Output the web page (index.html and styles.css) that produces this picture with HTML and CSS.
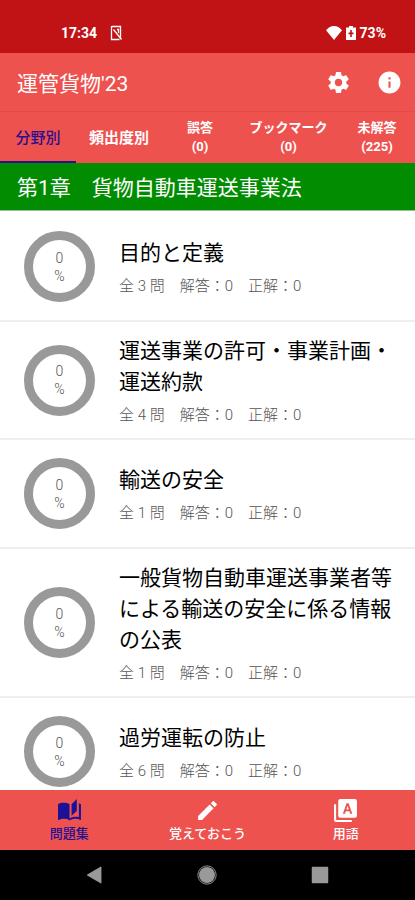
FILE: index.html
```html
<!DOCTYPE html>
<html lang="ja">
<head>
<meta charset="utf-8">
<meta name="viewport" content="width=device-width, initial-scale=1">
<title>運管貨物'23</title>
<link rel="stylesheet" href="styles.css">
</head>
<body>
<div class="status">
  <span class="status-side">
    <span>17:34</span>
    <svg class="sim" viewBox="0 0 14 16" aria-hidden="true"><path d="M3 1.500h8.500v11M2.500 1v13.500h8M4.500 4.500l8 10M8 4.500h1.500V8" fill="none" stroke="currentColor" stroke-width="1.300"/></svg>
  </span>
  <span class="status-side">
    <svg class="wifi" viewBox="0 0 16 14" aria-hidden="true"><path d="M8 14 0 4.300Q3.500 0 8 0t8 4.300z" fill="currentColor"/></svg>
    <svg class="battery" viewBox="0 0 10 14" aria-hidden="true"><path fill-rule="evenodd" d="M3 0h4v1.500h3V14H0V1.500h3zM4.200 4v2.500H2.500v1.700h1.700V11h1.600V8.200h1.700V6.500H5.800V4z" fill="currentColor"/></svg>
    <span>73%</span>
  </span>
</div>
<header class="appbar">
  <h1>運管貨物'23</h1>
  <button type="button" aria-label="設定"><svg viewBox="0 0 24 24"><path d="M12 15.500A3.500 3.500 0 0 1 8.500 12 3.500 3.500 0 0 1 12 8.500a3.500 3.500 0 0 1 3.500 3.500 3.500 3.500 0 0 1-3.500 3.500m7.430-2.530c.04-.32.07-.64.07-.97s-.03-.66-.07-1l2.110-1.630c.19-.15.24-.42.12-.64l-2-3.460c-.12-.22-.39-.31-.61-.22l-2.490 1c-.52-.39-1.060-.73-1.690-.98l-.37-2.650A.506.506 0 0 0 14 2h-4c-.25 0-.46.18-.5.42l-.37 2.650c-.63.25-1.170.59-1.690.98l-2.490-1c-.22-.09-.49 0-.61.22l-2 3.460c-.13.22-.07.49.12.64L4.570 11c-.04.34-.07.67-.07 1s.03.65.07.97l-2.110 1.660c-.19.15-.25.42-.12.64l2 3.460c.12.22.39.3.61.22l2.490-1.010c.52.4 1.060.74 1.690.99l.37 2.650c.04.24.25.42.5.42h4c.25 0 .46-.18.5-.42l.37-2.650c.63-.26 1.170-.59 1.690-.99l2.490 1.010c.22.08.49 0 .61-.22l2-3.460c.12-.22.07-.49-.12-.64z" fill="currentColor"/></svg></button>
  <button type="button" aria-label="情報"><svg viewBox="0 0 24 24"><path d="M13 9h-2V7h2m0 10h-2v-6h2m-1-9.500A10.500 10.500 0 0 0 1.500 12 10.500 10.500 0 0 0 12 22.500 10.500 10.500 0 0 0 22.500 12 10.500 10.500 0 0 0 12 1.500z" fill="currentColor"/></svg></button>
</header>
<nav class="tabs">
  <button type="button" class="tab active">分野別</button>
  <button type="button" class="tab">頻出度別</button>
  <button type="button" class="tab small">誤答<br>(0)</button>
  <button type="button" class="tab small">ブックマーク<br>(0)</button>
  <button type="button" class="tab small">未解答<br>(225)</button>
</nav>
<main>
  <h2>第1章　貨物自動車運送事業法</h2>
  <ul class="list">
    <li><div class="ring"><span>0</span><span>%</span></div><div class="info"><h3>目的と定義</h3><p>全 3 問　解答：0　正解：0</p></div></li>
    <li><div class="ring"><span>0</span><span>%</span></div><div class="info"><h3>運送事業の許可・事業計画・運送約款</h3><p>全 4 問　解答：0　正解：0</p></div></li>
    <li><div class="ring"><span>0</span><span>%</span></div><div class="info"><h3>輸送の安全</h3><p>全 1 問　解答：0　正解：0</p></div></li>
    <li><div class="ring"><span>0</span><span>%</span></div><div class="info"><h3>一般貨物自動車運送事業者等による輸送の安全に係る情報の公表</h3><p>全 1 問　解答：0　正解：0</p></div></li>
    <li><div class="ring"><span>0</span><span>%</span></div><div class="info"><h3>過労運転の防止</h3><p>全 6 問　解答：0　正解：0</p></div></li>
  </ul>
</main>
<nav class="bottom">
  <button type="button" class="active"><svg viewBox="0 0 24 24" aria-hidden="true"><path d="m19 1-5 5v11l5-4.500V1zM1 6v14.650c0 .25.25.5.5.5.1 0 .15-.05.25-.05C3.100 20.450 5.050 20 6.500 20c1.950 0 4.050.4 5.500 1.500V6c-1.450-1.100-3.550-1.500-5.500-1.500S2.450 4.900 1 6zm22 13.500V6c-.6-.45-1.250-.75-2-1v13.500c-1.100-.35-2.300-.5-3.500-.5-1.700 0-4.150.65-5.500 1.500v2c1.350-.85 3.800-1.500 5.500-1.500 1.650 0 3.350.3 4.750 1.050.1.050.15.050.25.050.25 0 .5-.25.5-.5v-1.100z" fill="currentColor"/></svg>問題集</button>
  <button type="button"><svg viewBox="0 0 24 24" aria-hidden="true"><path d="M20.710 7.040c.39-.39.39-1.040 0-1.410l-2.340-2.340c-.37-.39-1.020-.39-1.410 0l-1.840 1.830 3.750 3.750M3 17.250V21h3.750L17.810 9.930l-3.750-3.750z" fill="currentColor"/></svg>覚えておこう</button>
  <button type="button"><svg viewBox="0 0 24 24" aria-hidden="true"><path fill-rule="evenodd" d="M3 6H1v15a2 2 0 0 0 2 2h15v-2H3zM21 1H7a2 2 0 0 0-2 2v14a2 2 0 0 0 2 2h14a2 2 0 0 0 2-2V3a2 2 0 0 0-2-2zM13 5h2l3.500 10h-2l-.8-2.400h-3.400L11.500 15h-2zm-.1 6h2.200L14 7.500z" fill="currentColor"/></svg>用語</button>
</nav>
<div class="system">
  <button type="button" aria-label="戻る"><svg viewBox="0 0 24 24"><path d="M19 3.500v17q0 1-1 .5L3.500 12.500q-.5-.5 0-1L18 3q1-.5 1 .5z" fill="currentColor"/></svg></button>
  <button type="button" aria-label="ホーム"><svg viewBox="0 0 24 24"><circle cx="12" cy="12" r="10" fill="none" stroke="currentColor"/><circle cx="12" cy="12" r="8.700" fill="currentColor"/></svg></button>
  <button type="button" aria-label="履歴"><svg viewBox="0 0 24 24"><rect x="3" y="3" width="18" height="18" rx="1" fill="currentColor"/></svg></button>
</div>
</body>
</html>
```
FILE: styles.css
```css
* { box-sizing: border-box; margin: 0; padding: 0; }
body {
  height: 100vh;
  display: flex;
  flex-direction: column;
  background: #fff;
  font-family: Roboto, "Noto Sans CJK JP", sans-serif;
  color: #000;
}
button { background: none; border: 0; color: inherit; font: inherit; }
svg { display: block; }
.status {
  flex: none;
  height: 53px;
  padding: 12px 29px 0 61px;
  display: flex;
  align-items: center;
  justify-content: space-between;
  background: #c11315;
  color: #fff;
  font-size: 14px;
  font-weight: 700;
}
.status-side { display: flex; align-items: center; gap: 4px; }
.sim { width: 14px; height: 16px; margin-left: 8px; }
.wifi { width: 16px; height: 14px; }
.battery { width: 10px; height: 14px; }
.appbar {
  flex: none;
  height: 59px;
  padding: 0 13px 0 17px;
  display: flex;
  align-items: center;
  gap: 26px;
  background: #ed524f;
  border-bottom: 1px solid #e04c49;
  color: #fff;
}
.appbar h1 { flex: 1; font-size: 21px; font-weight: 400; }
.appbar svg { width: 25px; height: 25px; }
.tabs {
  flex: none;
  height: 51px;
  display: grid;
  grid-template-columns: 76fr 86fr 76fr 101fr 76fr;
  background: #ed524f;
  color: #fff;
}
.tab { font-size: 15px; font-weight: 700; white-space: nowrap; border-bottom: 2px solid transparent; }
.tab.active { color: #2c0f8c; border-color: #2c0f8c; font-weight: 500; }
.tab.small { font-size: 13px; line-height: 19px; }
main { flex: 1; min-height: 0; overflow: hidden; }
h2 {
  height: 48px;
  padding: 0 17px;
  line-height: 50px;
  background: #028c02;
  border-bottom: 1px solid #8fc28f;
  color: #fff;
  font-size: 21px;
  font-weight: 400;
}
.list { list-style: none; padding-top: 2px; }
.list li {
  min-height: 109px;
  padding: 12px 16px 12px 24px;
  display: flex;
  align-items: center;
  gap: 24px;
  border-bottom: 2px solid #eee;
}
.ring {
  flex: none;
  width: 71px;
  height: 71px;
  border: 9px solid #999;
  border-radius: 50%;
  display: flex;
  flex-direction: column;
  align-items: center;
  justify-content: center;
  color: #555;
  font-size: 14px;
  font-weight: 300;
  line-height: 18px;
}
.info { flex: 1; padding-top: 2px; }
.info h3 { font-size: 21px; font-weight: 400; line-height: 31px; }
.info p { margin-top: 6px; color: #555; font-size: 15px; font-weight: 300; line-height: 22px; }
.bottom {
  flex: none;
  height: 60px;
  display: grid;
  grid-template-columns: repeat(3, 1fr);
  background: #ed524f;
  color: #fff;
}
.bottom button {
  display: flex;
  flex-direction: column;
  align-items: center;
  justify-content: center;
  gap: 2px;
  font-size: 13px;
  font-weight: 500;
  line-height: 18px;
}
.bottom svg { width: 25px; height: 25px; }
.bottom .active { color: #1c1196; }
.system {
  flex: none;
  height: 50px;
  padding: 0 39px;
  display: grid;
  grid-template-columns: repeat(3, 1fr);
  place-items: center;
  background: #000;
  color: #999;
}
.system svg { width: 22px; height: 22px; }
```
